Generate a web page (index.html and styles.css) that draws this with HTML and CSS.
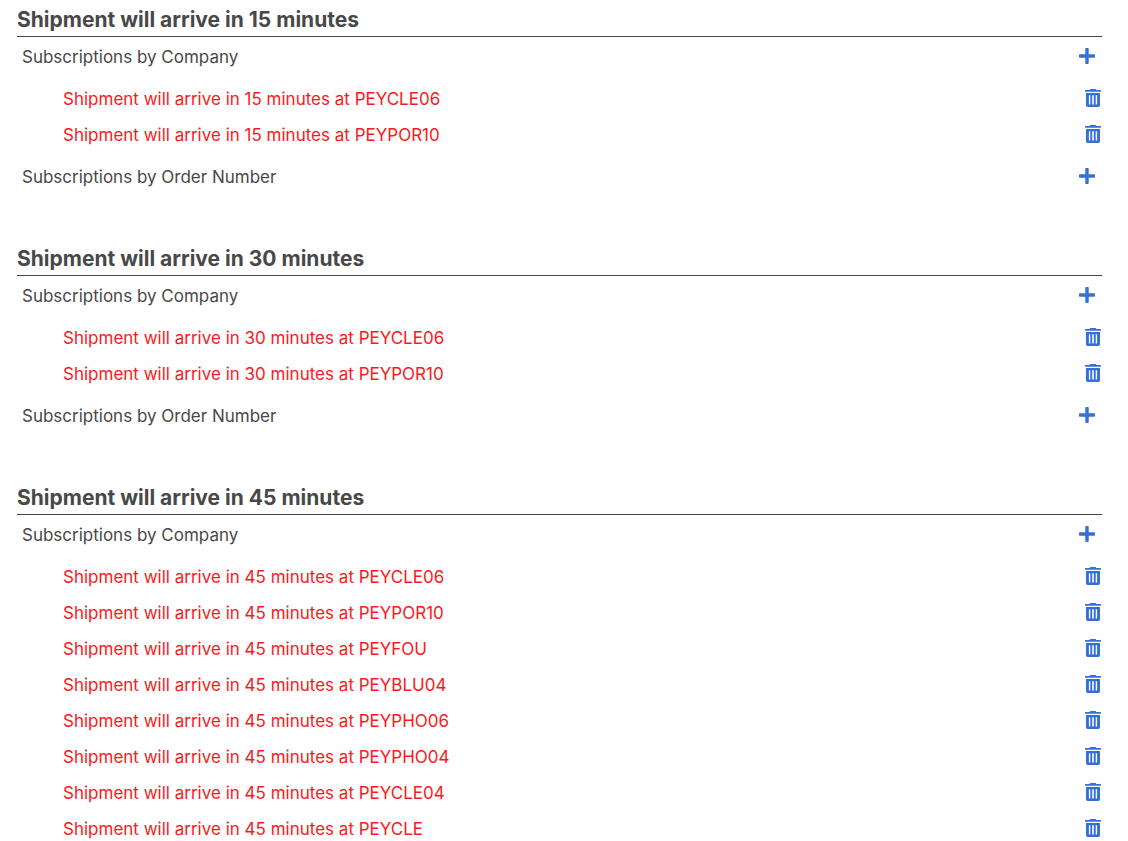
FILE: index.html
```html
<!DOCTYPE html>
<html lang="en">
<head>
<meta charset="utf-8">
<meta name="viewport" content="width=device-width, initial-scale=1">
<title>Subscriptions</title>
<link rel="stylesheet" href="styles.css">
</head>
<body>
<svg class="sprite" aria-hidden="true">
  <symbol id="plus" viewBox="0 0 16 16"><path fill="currentColor" d="M7 0H9Q9.700 0 9.700 .7V6.300H15.300Q16 6.300 16 7V9Q16 9.700 15.300 9.700H9.700V15.300Q9.700 16 9 16H7Q6.300 16 6.300 15.300V9.700H.7Q0 9.700 0 9V7Q0 6.300 .7 6.300H6.300V.7Q6.300 0 7 0Z"/></symbol>
  <symbol id="trash" viewBox="0 0 16 18"><path fill="currentColor" fill-rule="evenodd" d="M0 1.6Q0 1 .6 1H4.600L5.300 0H10.700L11.400 1H15.400Q16 1 16 1.600V2.300Q16 2.800 15.400 2.800H.6Q0 2.800 0 2.300ZM1 4H15V16.300Q15 18 13.300 18H2.700Q1 18 1 16.300ZM3.900 6.200V15.500H5.300V6.200ZM7.200 6.200V15.500H8.800V6.200ZM10.700 6.200V15.500H12.100V6.200Z"/></symbol>
</svg>
<main class="page" id="page"></main>
<script src="app.js"></script>
</body>
</html>
```

FILE: styles.css
```css
* {
  box-sizing: border-box;
}

body {
  margin: 0;
  background: #fff;
  color: #484848;
  font: 17px/24px Inter, sans-serif;
}

.sprite {
  display: none;
}

.page {
  display: flex;
  flex-direction: column;
  gap: 46px;
  padding: 4px 26px 0 17px;
}

.title {
  margin: 0;
  border-bottom: 1px solid #444;
  font-size: 21px;
  line-height: 32px;
  font-weight: 700;
}

.row {
  display: flex;
  align-items: center;
  justify-content: space-between;
}

.group {
  height: 40px;
  padding: 0 7px 0 5px;
}

.list {
  margin: 0;
  padding: 4px 1px 4px 46px;
  list-style: none;
}

.item {
  height: 36px;
  color: #fa1920;
}

.icon-button {
  display: flex;
  padding: 0 0 2px;
  border: 0;
  background: none;
  color: #366fd6;
  cursor: pointer;
}

.plus {
  width: 16px;
  height: 16px;
}

.trash {
  width: 16px;
  height: 18px;
}
```

FILE: app.js
```js
const sections = [
  { minutes: 15, companies: ["PEYCLE06", "PEYPOR10"], orders: true },
  { minutes: 30, companies: ["PEYCLE06", "PEYPOR10"], orders: true },
  { minutes: 45, companies: ["PEYCLE06", "PEYPOR10", "PEYFOU", "PEYBLU04", "PEYPHO06", "PEYPHO04", "PEYCLE04", "PEYCLE"], orders: false }
];

const button = (icon, label) =>
  `<button class="icon-button" type="button" aria-label="${label}"><svg class="${icon}"><use href="#${icon}"/></svg></button>`;

const group = (name) =>
  `<div class="row group"><span>${name}</span>${button("plus", "Add to " + name)}</div>`;

document.getElementById("page").innerHTML = sections.map(({ minutes, companies, orders }) => {
  const title = `Shipment will arrive in ${minutes} minutes`;
  const items = companies.map((company) =>
    `<li class="row item"><span>${title} at ${company}</span>${button("trash", "Delete " + company)}</li>`).join("");
  return `<section><h2 class="title">${title}</h2>${group("Subscriptions by Company")}<ul class="list">${items}</ul>${orders ? group("Subscriptions by Order Number") : ""}</section>`;
}).join("");
```
